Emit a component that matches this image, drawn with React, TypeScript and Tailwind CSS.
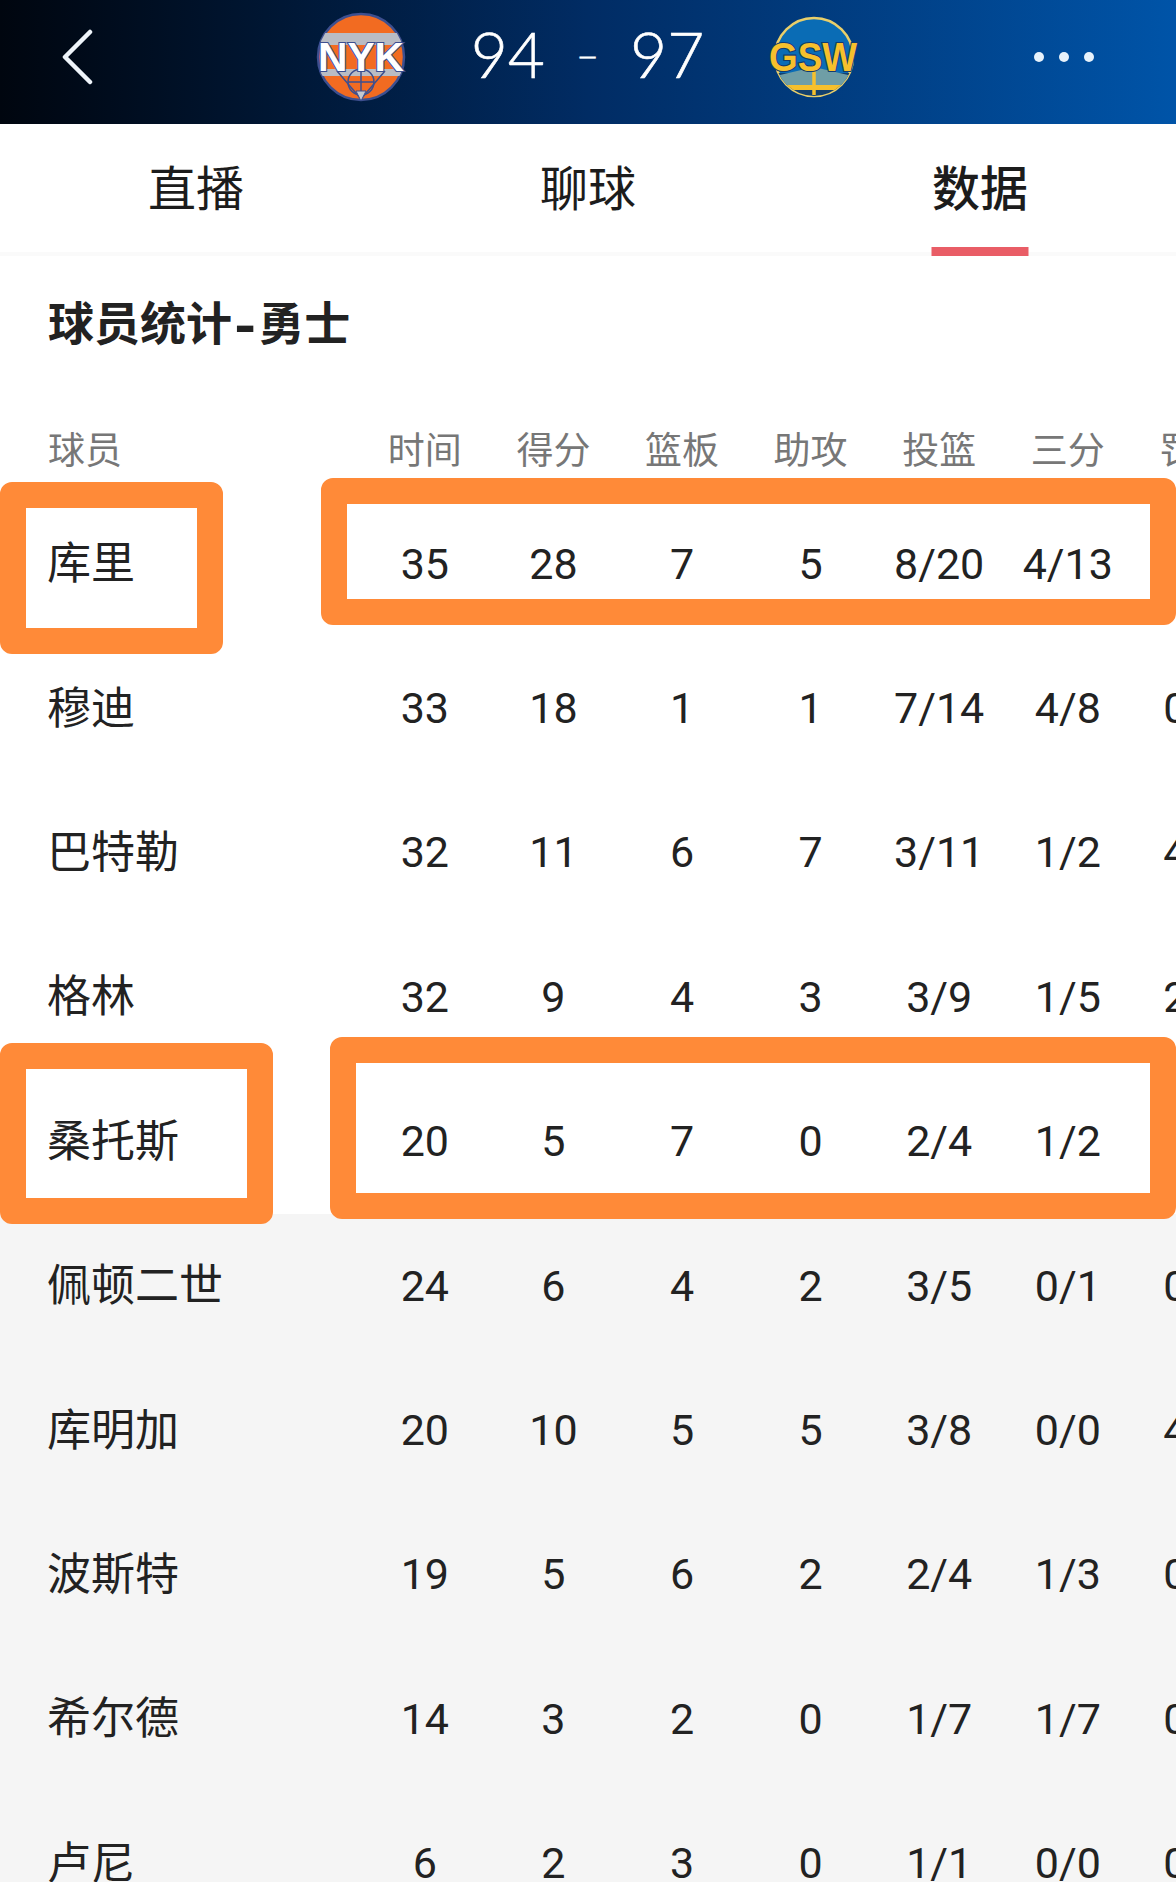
const font = { fontFamily: 'Roboto, "Noto Sans CJK SC", "Noto Sans", sans-serif' };
const cjk = { fontFamily: '"Noto Sans CJK SC", "Noto Sans", sans-serif' };

const starters = [
  ["库里", "35", "28", "7", "5", "8/20", "4/13", "6/6"],
  ["穆迪", "33", "18", "1", "1", "7/14", "4/8", "0/0"],
  ["巴特勒", "32", "11", "6", "7", "3/11", "1/2", "4/4"],
  ["格林", "32", "9", "4", "3", "3/9", "1/5", "2/2"],
  ["桑托斯", "20", "5", "7", "0", "2/4", "1/2", "0/0"],
];
const bench = [
  ["佩顿二世", "24", "6", "4", "2", "3/5", "0/1", "0/0"],
  ["库明加", "20", "10", "5", "5", "3/8", "0/0", "4/4"],
  ["波斯特", "19", "5", "6", "2", "2/4", "1/3", "0/0"],
  ["希尔德", "14", "3", "2", "0", "1/7", "1/7", "0/0"],
  ["卢尼", "6", "2", "3", "0", "1/1", "0/0", "0/0"],
];
const heads = ["时间", "得分", "篮板", "助攻", "投篮", "三分", "罚球"];

function Row({ cells }: { cells: string[] }) {
  return (
    <div className="flex h-[144.4px] shrink-0 items-center text-[43px] leading-none text-[#222222]">
      <div className="w-[360.5px] shrink-0 pl-[47px] text-[44px]">{cells[0]}</div>
      {cells.slice(1).map((c, i) => (
        <div key={i} className="w-[128.6px] shrink-0 whitespace-nowrap text-center">
          {c}
        </div>
      ))}
    </div>
  );
}

function NykLogo() {
  return (
    <svg width="92" height="92" viewBox="0 0 92 92" className="shrink-0 overflow-visible">
      <defs>
        <clipPath id="nyk-ball">
          <circle cx="46" cy="46" r="43" />
        </clipPath>
      </defs>
      <circle cx="46" cy="46" r="43" fill="#f26b21" stroke="#3d4f8f" strokeWidth="2.5" />
      <g clipPath="url(#nyk-ball)">
        <path d="M3 22 H89 V34 H3 Z" fill="#b9bcc4" />
        <path d="M3 58 H89 V65 H3 Z" fill="#b9bcc4" />
        <g fill="none" stroke="#3d4f8f" strokeWidth="1.5">
          <circle cx="46" cy="71" r="13" />
          <path d="M46 58 V88 M33 71 H59 M22 60 L46 88 L70 60" />
        </g>
        <path d="M41 80 H51 L46 90 Z" fill="#c6c9d0" stroke="#3d4f8f" strokeWidth="1" />
      </g>
      <text
        x="46"
        y="60"
        textAnchor="middle"
        fontSize="40"
        fontWeight="700"
        fill="#ffffff"
        stroke="#3d4f8f"
        strokeWidth="2.2"
        paintOrder="stroke"
        fontFamily='"Liberation Sans", sans-serif'
        textLength="86"
        lengthAdjust="spacingAndGlyphs"
      >
        NYK
      </text>
    </svg>
  );
}

function GswLogo() {
  return (
    <svg width="92" height="92" viewBox="0 0 92 92" className="shrink-0 overflow-visible">
      <defs>
        <clipPath id="gsw-ball">
          <circle cx="46" cy="46" r="39" />
        </clipPath>
      </defs>
      <circle cx="46" cy="46" r="39" fill="#0a6cb5" stroke="#e9cf6a" strokeWidth="2.5" />
      <g clipPath="url(#gsw-ball)">
        <path d="M5 62 H87 V86 H5 Z" fill="#12406f" />
        <path d="M12 64 L46 56 L80 64 V74 H12 Z" fill="#6f9ea6" />
        <path d="M5 74 H87 V79 H5 Z" fill="#f6c02c" />
        <path d="M46 54 V84" stroke="#f6c02c" strokeWidth="3.5" />
      </g>
      <text
        x="45"
        y="60"
        textAnchor="middle"
        fontSize="40"
        fontWeight="700"
        fill="#f6c02c"
        stroke="#123a6e"
        strokeWidth="2.2"
        paintOrder="stroke"
        fontFamily='"Liberation Sans", sans-serif'
        textLength="88"
        lengthAdjust="spacingAndGlyphs"
      >
        GSW
      </text>
    </svg>
  );
}

export default function App() {
  return (
    <div className="relative h-[1882px] w-[1176px] overflow-hidden bg-white" style={font}>
      <header className="flex h-[124px] items-center bg-gradient-to-r from-[#00060f] via-[#012c64] to-[#0054a8] pb-[10px] text-white">
        <div className="flex w-[315px] shrink-0 pl-[60px]">
          <svg width="34" height="56" viewBox="0 0 34 56" fill="none" stroke="#eef4fa" strokeWidth="4.5" strokeLinecap="round" strokeLinejoin="round">
            <path d="M30 3 L5 28 L30 53" />
          </svg>
        </div>
        <NykLogo />
        <div
          className="flex w-[361px] shrink-0 items-center justify-center gap-[31px] pb-[7px] text-[64px] font-light leading-none [-webkit-text-stroke:0.6px_white]"
          style={{ fontFamily: 'Lato, "Noto Sans", sans-serif' }}
        >
          <span>94</span>
          <span className="text-[40px]">–</span>
          <span>97</span>
        </div>
        <GswLogo />
        <div className="ml-[174px] flex gap-[15px]">
          <span className="h-[10px] w-[10px] rounded-full bg-[#e8f2fb]" />
          <span className="h-[10px] w-[10px] rounded-full bg-[#e8f2fb]" />
          <span className="h-[10px] w-[10px] rounded-full bg-[#e8f2fb]" />
        </div>
      </header>

      <nav className="flex h-[132px] border-b-[4px] border-[#fafafa] text-[48px] leading-none text-[#1c1c1c]" style={cjk}>
        <div className="flex flex-1 items-center justify-center pb-[7px]">直播</div>
        <div className="flex flex-1 items-center justify-center pb-[7px]">聊球</div>
        <div className="relative flex flex-1 items-center justify-center pb-[7px] font-medium">
          数据
          <span className="absolute bottom-[-4px] left-1/2 h-[9px] w-[97px] -translate-x-1/2 bg-[#e95d66]" />
        </div>
      </nav>

      <h2 className="flex h-[138px] items-center pb-[10px] pl-12 text-[46px] font-bold leading-none text-[#222222]" style={cjk}>
        球员统计<span className="px-[2px] text-[60px]">-</span>勇士
      </h2>

      <div className="flex h-[98px] items-start pt-[12px] text-[37px] leading-[84px] text-[#777777]" style={cjk}>
        <div className="w-[360.5px] shrink-0 pl-12">球员</div>
        {heads.map((h) => (
          <div key={h} className="w-[128.6px] shrink-0 whitespace-nowrap text-center">
            {h}
          </div>
        ))}
      </div>

      <section className="flex flex-col">
        {starters.map((r) => (
          <Row key={r[0]} cells={r} />
        ))}
      </section>
      <section className="flex flex-col bg-[#f5f5f5] pb-10">
        {bench.map((r) => (
          <Row key={r[0]} cells={r} />
        ))}
      </section>

      <div className="absolute left-0 top-[482px] h-[172px] w-[223px] rounded-[12px] border-[26px] border-[#ff8a38]" />
      <div className="absolute left-[321px] top-[478px] h-[147px] w-[855px] rounded-[12px] border-[26px] border-[#ff8a38]" />
      <div className="absolute left-0 top-[1043px] h-[181px] w-[273px] rounded-[12px] border-[26px] border-[#ff8a38]" />
      <div className="absolute left-[330px] top-[1037px] h-[182px] w-[846px] rounded-[12px] border-[26px] border-[#ff8a38]" />
    </div>
  );
}
